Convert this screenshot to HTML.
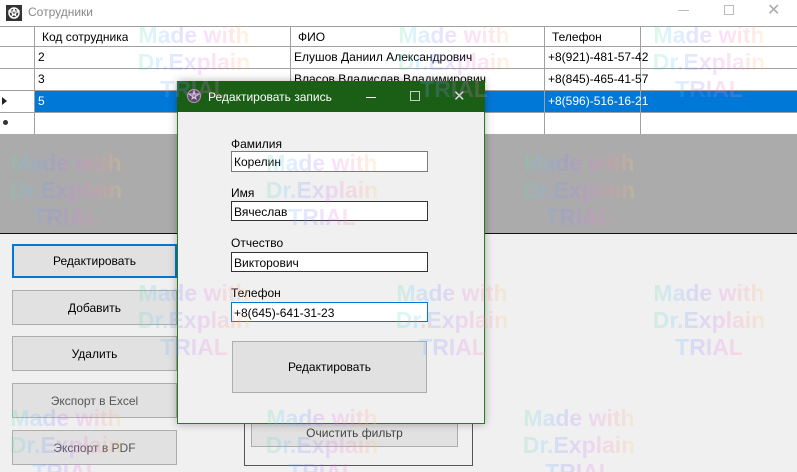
<!DOCTYPE html>
<html><head><meta charset="utf-8"><style>
*{margin:0;padding:0;box-sizing:border-box}
html,body{width:797px;height:472px;overflow:hidden}
body{background:#f0f0f0;font-family:"Liberation Sans","DejaVu Sans",sans-serif;font-size:12px;position:relative;color:#000}
.a{position:absolute}
.btn{position:absolute;background:#e1e1e1;border:1px solid #adadad;display:flex;align-items:center;justify-content:center;font-size:12px}
.cell{position:absolute;height:22px;line-height:22px;padding-left:4px;white-space:nowrap;overflow:hidden}
.wm{position:absolute;font-weight:bold;font-size:23px;line-height:27px;text-align:center;width:128px;opacity:.22;background:linear-gradient(90deg,#6e6,#6cf,#88f,#e7e,#f99,#fe6);-webkit-background-clip:text;background-clip:text;color:transparent}
</style></head><body>
<div class="a" style="left:0;top:0;width:797px;height:26px;background:#fff"></div>
<svg class="a" style="left:6px;top:5px" width="16" height="16" viewBox="0 0 16 16"><rect width="16" height="16" fill="#333"/><circle cx="8" cy="8" r="5" fill="none" stroke="#fff" stroke-width="1.5"/><path d="M8 3L10 11L3 6H13L6 11Z" fill="none" stroke="#fff" stroke-width="1"/></svg>
<div class="a" style="left:28px;top:5px;color:#888;font-size:12px">Сотрудники</div>
<div class="a" style="left:678px;top:10px;width:11px;height:1px;background:#bbb"></div>
<div class="a" style="left:724px;top:5px;width:10px;height:10px;border:1px solid #bbb"></div>
<div class="a" style="left:767px;top:0;color:#aaa;font-size:16px">✕</div>
<div class="a" style="left:0;top:26px;width:797px;height:108px;background:#fff;border-top:1px solid #a0a0a0"></div>
<div class="a" style="left:0;top:46px;width:797px;height:1px;background:#a0a0a0"></div>
<div class="a" style="left:0;top:68px;width:797px;height:1px;background:#a0a0a0"></div>
<div class="a" style="left:0;top:90px;width:797px;height:1px;background:#a0a0a0"></div>
<div class="a" style="left:0;top:112px;width:797px;height:1px;background:#a0a0a0"></div>
<div class="a" style="left:35px;top:91px;width:762px;height:21px;background:#0078d7"></div>
<div class="a" style="left:34px;top:27px;width:1px;height:107px;background:#a0a0a0"></div>
<div class="a" style="left:290px;top:27px;width:1px;height:107px;background:#a0a0a0"></div>
<div class="a" style="left:544px;top:27px;width:1px;height:107px;background:#a0a0a0"></div>
<div class="a" style="left:640px;top:27px;width:1px;height:107px;background:#a0a0a0"></div>
<div class="cell" style="left:38px;top:26px">Код сотрудника</div>
<div class="cell" style="left:294px;top:26px">ФИО</div>
<div class="cell" style="left:548px;top:26px">Телефон</div>
<div class="cell" style="left:34px;top:46px">2</div>
<div class="cell" style="left:290px;top:46px">Елушов Даниил Александрович</div>
<div class="cell" style="left:544px;top:46px">+8(921)-481-57-42</div>
<div class="cell" style="left:34px;top:68px">3</div>
<div class="cell" style="left:290px;top:68px">Власов Владислав Владимирович</div>
<div class="cell" style="left:544px;top:68px">+8(845)-465-41-57</div>
<div class="cell" style="left:34px;top:90px;color:#fff">5</div>
<div class="cell" style="left:544px;top:90px;color:#fff">+8(596)-516-16-21</div>
<div class="a" style="left:2px;top:97px;width:0;height:0;border-left:5px solid #222;border-top:4px solid transparent;border-bottom:4px solid transparent"></div>
<div class="a" style="left:3px;top:120px;width:5px;height:5px;border-radius:50%;background:#333"></div>
<div class="a" style="left:0;top:134px;width:797px;height:99px;background:#ababab"></div>
<div class="a" style="left:0;top:233px;width:797px;height:1px;background:#111"></div>
<div class="btn" style="left:12px;top:244px;width:165px;height:34px;border:2px solid #0078d7">Редактировать</div>
<div class="btn" style="left:12px;top:290px;width:165px;height:35px">Добавить</div>
<div class="btn" style="left:12px;top:336px;width:165px;height:35px">Удалить</div>
<div class="btn" style="left:12px;top:383px;width:165px;height:35px;color:#555">Экспорт в Excel</div>
<div class="btn" style="left:12px;top:430px;width:165px;height:35px;color:#555">Экспорт в PDF</div>
<div class="a" style="left:244px;top:400px;width:229px;height:66px;border:1px solid #555"></div>
<div class="btn" style="left:251px;top:418px;width:207px;height:29px;color:#444">Очистить фильтр</div>
<div class="a" style="left:177px;top:81px;width:308px;height:343px;background:#f0f0f0;border:1px solid #2a7a22;box-shadow:0 0 8px rgba(0,0,0,.3)"></div>
<div class="a" style="left:177px;top:81px;width:308px;height:31px;background:#1b5e16"></div>
<svg class="a" style="left:186px;top:88px" width="16" height="16" viewBox="0 0 16 16"><circle cx="8" cy="8" r="6.5" fill="#5a4a6a" stroke="#b9a" stroke-width="1"/><path d="M8 2.5L10 11L3 6H13L6 11Z" fill="none" stroke="#dcd" stroke-width="1"/></svg>
<div class="a" style="left:208px;top:90px;color:#fff;font-size:12px">Редактировать запись</div>
<div class="a" style="left:366px;top:97px;width:10px;height:1px;background:#fff"></div>
<div class="a" style="left:410px;top:91px;width:10px;height:10px;border:1px solid #ccc"></div>
<div class="a" style="left:453px;top:87px;color:#ddd;font-size:15px">✕</div>
<div class="a" style="left:231px;top:137px">Фамилия</div>
<div class="a" style="left:231px;top:151px;width:197px;height:21px;background:#fff;border:1px solid #7a7a7a;padding:3px 2px">Корелин</div>
<div class="a" style="left:231px;top:186px">Имя</div>
<div class="a" style="left:231px;top:201px;width:197px;height:20px;background:#fff;border:1px solid #333;padding:3px 2px">Вячеслав</div>
<div class="a" style="left:231px;top:236px">Отчество</div>
<div class="a" style="left:231px;top:252px;width:197px;height:20px;background:#fff;border:1px solid #333;padding:3px 2px">Викторович</div>
<div class="a" style="left:231px;top:286px">Телефон</div>
<div class="a" style="left:231px;top:302px;width:197px;height:20px;background:#fff;border:1px solid #0078d7;padding:3px 2px">+8(645)-641-31-23</div>
<div class="btn" style="left:232px;top:341px;width:195px;height:52px">Редактировать</div>
<div class="wm" style="left:130px;top:22px">Made with<br>Dr.Explain<br>TRIAL</div>
<div class="wm" style="left:390px;top:22px">Made with<br>Dr.Explain<br>TRIAL</div>
<div class="wm" style="left:645px;top:22px">Made with<br>Dr.Explain<br>TRIAL</div>
<div class="wm" style="left:2px;top:150px">Made with<br>Dr.Explain<br>TRIAL</div>
<div class="wm" style="left:258px;top:150px">Made with<br>Dr.Explain<br>TRIAL</div>
<div class="wm" style="left:515px;top:150px">Made with<br>Dr.Explain<br>TRIAL</div>
<div class="wm" style="left:130px;top:280px">Made with<br>Dr.Explain<br>TRIAL</div>
<div class="wm" style="left:388px;top:280px">Made with<br>Dr.Explain<br>TRIAL</div>
<div class="wm" style="left:645px;top:280px">Made with<br>Dr.Explain<br>TRIAL</div>
<div class="wm" style="left:2px;top:405px">Made with<br>Dr.Explain<br>TRIAL</div>
<div class="wm" style="left:258px;top:405px">Made with<br>Dr.Explain<br>TRIAL</div>
<div class="wm" style="left:515px;top:405px">Made with<br>Dr.Explain<br>TRIAL</div>
</body></html>
